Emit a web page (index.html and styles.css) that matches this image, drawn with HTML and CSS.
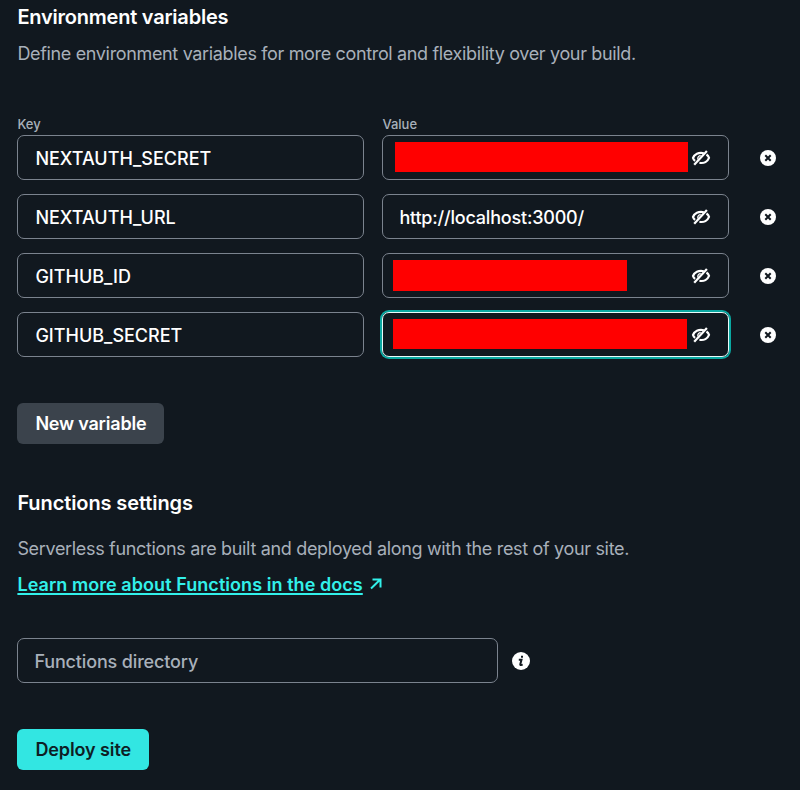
FILE: index.html
```html
<!DOCTYPE html>
<html lang="en">
<head>
<meta charset="utf-8">
<title>Environment variables</title>
<link rel="stylesheet" href="styles.css">
</head>
<body>
<svg class="defs" aria-hidden="true">
  <symbol id="eye-off" viewBox="0 0 20 18">
    <g fill="none" stroke="currentColor" stroke-width="2.200">
      <path d="M12.800 4.200C7.500 2.900 3.300 5.500 2 9c.4 1.200 1.100 2.100 2.100 2.800"/>
      <path d="M15.500 5.500c1.300.9 2.100 2 2.500 3.300-1.300 3.500-5 5.900-9.600 4.900"/>
      <path d="M6.800 10.300c-.3-2 .8-3.500 2.900-4" stroke-width="1.200"/>
      <path d="M3.200 15.800 15.900 1.900"/>
    </g>
  </symbol>
  <symbol id="remove" viewBox="0 0 16 16">
    <circle cx="8" cy="8" r="8" fill="currentColor"/>
    <path class="cutout" d="m5.300 5.300 5.400 5.400m0-5.400-5.400 5.400"/>
  </symbol>
</svg>
<main class="page">
  <section>
    <h2 class="tight">Environment variables</h2>
    <p class="lead">Define environment variables for more control and flexibility over your build.</p>
    <div class="variables">
      <div class="row labels"><span>Key</span><span>Value</span></div>
      <div class="row">
        <div class="field">NEXTAUTH_SECRET</div>
        <div class="field value"><i class="redacted first"></i><svg class="eye"><use href="#eye-off"/></svg></div>
        <svg class="remove"><use href="#remove"/></svg>
      </div>
      <div class="row">
        <div class="field">NEXTAUTH_URL</div>
        <div class="field value"><span class="url">http://localhost:3000/</span><svg class="eye"><use href="#eye-off"/></svg></div>
        <svg class="remove"><use href="#remove"/></svg>
      </div>
      <div class="row">
        <div class="field">GITHUB_ID</div>
        <div class="field value"><i class="redacted short"></i><svg class="eye"><use href="#eye-off"/></svg></div>
        <svg class="remove"><use href="#remove"/></svg>
      </div>
      <div class="row">
        <div class="field">GITHUB_SECRET</div>
        <div class="field value focused"><i class="redacted"></i><svg class="eye"><use href="#eye-off"/></svg></div>
        <svg class="remove"><use href="#remove"/></svg>
      </div>
    </div>
    <button class="button secondary">New variable</button>
  </section>
  <section class="functions">
    <h2>Functions settings</h2>
    <p class="lead">Serverless functions are built and deployed along with the rest of your site.</p>
    <div class="docs"><a href="#">Learn more about Functions in the docs</a><svg class="arrow" viewBox="0 0 12 12"><path d="M1 10.500 10 1.800M2.500 1.500h8v8"/></svg></div>
    <div class="directory">
      <div class="field placeholder">Functions directory</div>
      <svg class="info" viewBox="0 0 18 18"><circle cx="9" cy="9" r="9" fill="currentColor"/><g class="cutout"><path d="M6.800 7.700h2.700L8.300 12.200q-.2 1 .7.900l1.700-.5"/><path d="M10 3.700v2"/></g></svg>
    </div>
  </section>
  <button class="button primary">Deploy site</button>
</main>
</body>
</html>
```

FILE: styles.css
```css
* { box-sizing: border-box; }
body {
  margin: 0;
  background: #11181f;
  color: #fff;
  font-family: Inter, "Liberation Sans", sans-serif;
  font-size: 18px;
}
.defs { position: absolute; width: 0; height: 0; }
.page { height: 790px; padding: 5px 0 0 17.400px; overflow: hidden; }
h2 { margin: 0; font-size: 20px; line-height: 24px; font-weight: 600; letter-spacing: -0.1px; }
.tight { letter-spacing: -0.22px; }
.lead { margin: 12px 0 0; line-height: 26px; color: #a8b0ba; letter-spacing: -0.345px; }
.variables { display: grid; row-gap: 14px; margin-top: 48px; }
.row { display: grid; grid-template-columns: 346.500px 346.500px 16px; column-gap: 18.500px; align-items: center; }
.labels { height: 20px; margin-bottom: -14px; font-size: 13px; line-height: 16px; font-weight: 500; color: #a8b0ba; align-items: start; padding-top: 1px; }
.field {
  display: flex;
  align-items: center;
  height: 45px;
  padding: 1px 17px 0;
  border: 1px solid #7b838e;
  border-radius: 7px;
  font-weight: 500;
}
.value { position: relative; justify-content: flex-end; padding: 0 17px 0 16px; }
.url { margin-right: auto; padding-top: 1px; letter-spacing: -0.2px; }
.focused { border-color: #e9fafa; box-shadow: 0 0 0 2px #0aa8a1; }
.redacted { position: absolute; left: 10px; top: 6px; width: 294px; height: 30px; background: #f00; }
.redacted.first { left: 12px; width: 293px; }
.redacted.short { width: 233.500px; height: 31px; }
.eye { width: 20px; height: 18px; }
.remove { width: 16px; height: 16px; margin-left: 12.700px; }
.cutout { fill: none; stroke: #11181f; stroke-width: 2; }
.button {
  display: block;
  height: 41px;
  padding: 0 18px;
  border: 0;
  border-radius: 6px;
  font: 600 18px/41px Inter, "Liberation Sans", sans-serif;
  letter-spacing: -0.2px;
  white-space: nowrap;
  text-align: left;
}
.secondary { width: 147px; margin-top: 45.600px; background: #3b434c; color: #fff; }
.primary { width: 132px; margin-top: 45.800px; background: #32e6e2; color: #0e1e25; letter-spacing: -0.1px; }
.functions { margin-top: 47px; }
.functions .lead { margin-top: 21px; letter-spacing: -0.33px; }
.docs { display: flex; align-items: center; gap: 7px; margin-top: 9.600px; height: 26px; color: #32f0ea; }
.docs a { color: inherit; font-weight: 600; letter-spacing: 0.06px; text-decoration-thickness: 2px; text-underline-offset: 2px; }
.arrow { width: 12px; height: 12px; fill: none; stroke: currentColor; stroke-width: 2; }
.directory { display: flex; align-items: center; gap: 14px; margin-top: 41px; }
.placeholder { width: 480.500px; padding: 1px 16px 0; color: #a8b0ba; letter-spacing: -0.15px; }
.info { width: 18px; height: 18px; }
```
